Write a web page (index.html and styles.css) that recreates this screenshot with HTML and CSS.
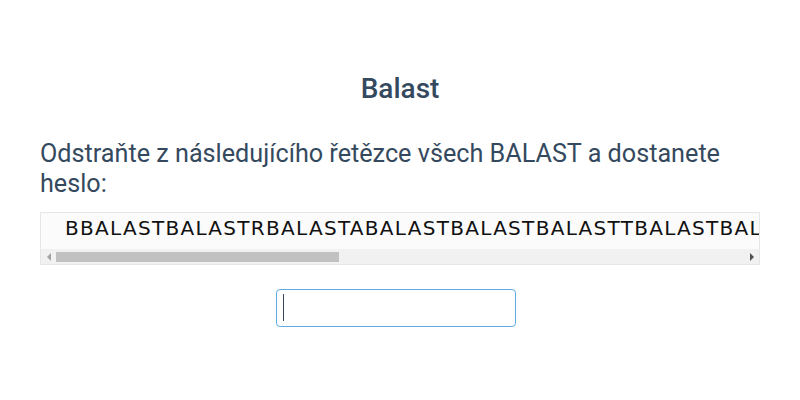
FILE: index.html
```html
<!DOCTYPE html>
<html lang="cs">
<head>
  <meta charset="UTF-8">
  <meta name="viewport" content="width=device-width, initial-scale=1.0">
  <title>Balast</title>
  <link rel="stylesheet" href="styles.css">
</head>
<body>
  <div class="page">
    <h1>Balast</h1>

    <p class="task">Odstraňte z následujícího řetězce všech BALAST a dostanete heslo:</p>

    <div class="puzzle">
      <pre class="puzzle-text">BBALASTBALASTRBALASTABALASTBALASTBALASTTBALASTBALASTOBALASTBALASTBALASTRBALASTBALASTTBALASTBALASTBALASTABALAST</pre>
      <div class="scrollbar">
        <span class="arrow arrow-left"></span>
        <div class="track"><div class="thumb"></div></div>
        <span class="arrow arrow-right"></span>
      </div>
    </div>

    <div class="answer">
      <div class="answer-field">
        <input type="text" class="answer-input">
        <span class="caret"></span>
      </div>
    </div>
  </div>
</body>
</html>
```

FILE: styles.css
```css
body {
  margin: 0;
  font-family: Roboto, "Noto Sans", sans-serif;
  color: #34495e;
  background: #fff;
}
.page {
  max-width: 720px;
  margin: 0 auto;
  padding: 74px 40px 0;
}
h1 {
  margin: 0 0 35px;
  font-size: 28px;
  font-weight: 500;
  line-height: 30px;
  text-align: center;
}
.task {
  margin: 0 0 13px;
  font-size: 25.2px;
  line-height: 30px;
}
.puzzle {
  border: 1px solid #e6e6e6;
  background-color: #fbfbfb;
}
.puzzle-text {
  margin: 0;
  height: 36px;
  box-sizing: border-box;
  padding: 3px 24px 0;
  font-family: "DejaVu Sans", sans-serif;
  font-size: 20px;
  line-height: 24px;
  letter-spacing: 1.3px;
  color: #111;
  overflow: hidden;
}
.scrollbar {
  display: flex;
  align-items: center;
  height: 15px;
  background-color: #f1f1f1;
}
.arrow {
  width: 15px;
  height: 15px;
  display: flex;
  align-items: center;
  justify-content: center;
}
.arrow::before {
  content: "";
  border-top: 4px solid transparent;
  border-bottom: 4px solid transparent;
}
.arrow-left::before {
  border-right: 4px solid #a3a3a3;
}
.arrow-right::before {
  border-left: 4px solid #505050;
}
.track {
  flex: 1;
  height: 15px;
  display: flex;
  align-items: center;
}
.thumb {
  width: 283px;
  height: 10px;
  background-color: #c1c1c1;
}
.answer {
  display: flex;
  justify-content: center;
  padding: 24px 9px 0 0;
}
.answer-field {
  position: relative;
}
.answer-input {
  display: block;
  width: 240px;
  height: 38px;
  box-sizing: border-box;
  padding: 0 6px;
  font-family: Roboto, sans-serif;
  font-size: 22px;
  color: #34495e;
  border: 1px solid #5dade2;
  border-radius: 4px;
  outline: none;
}
.caret {
  position: absolute;
  left: 7px;
  top: 5px;
  width: 1px;
  height: 27px;
  background-color: #34495e;
}
```
